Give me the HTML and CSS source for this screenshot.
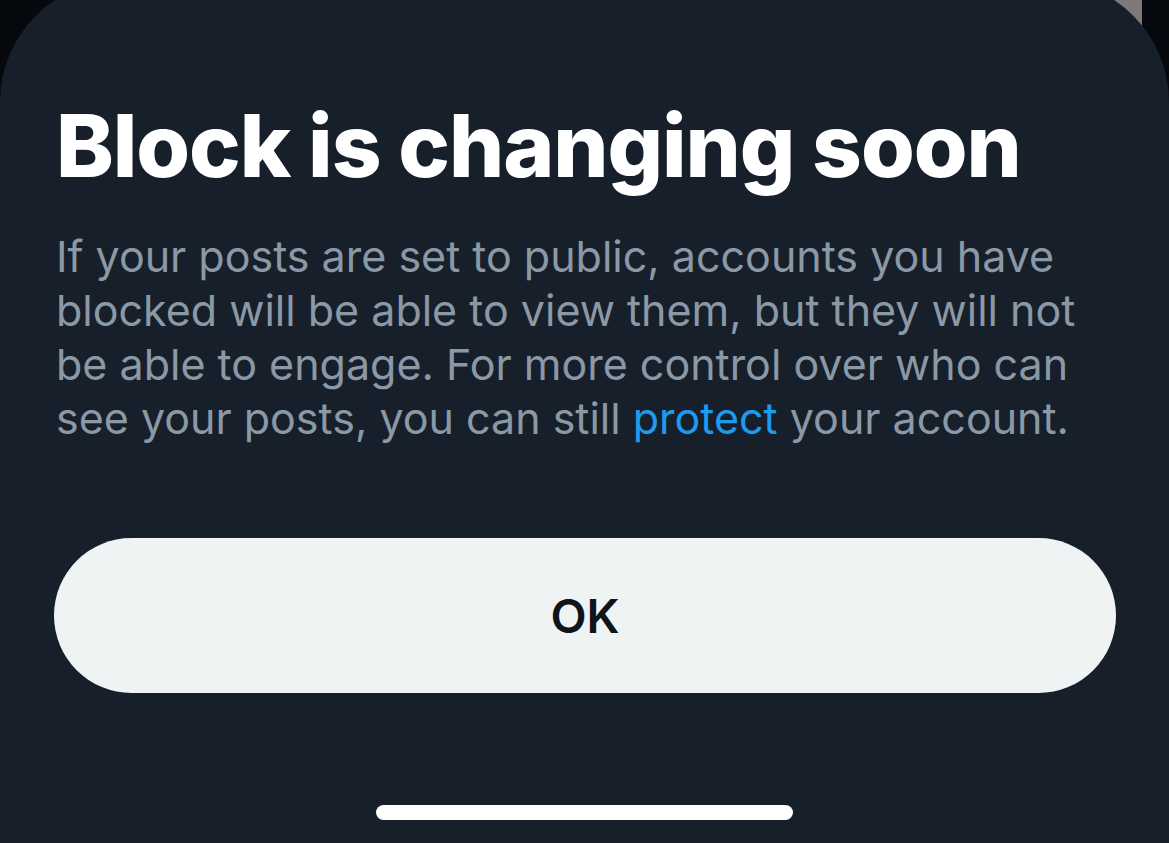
FILE: index.html
```html
<!DOCTYPE html>
<html lang="en">
<head>
<meta charset="utf-8">
<title>Block is changing soon</title>
<link rel="stylesheet" href="styles.css">
</head>
<body>
<div class="backdrop-card"></div>
<main class="sheet">
  <h1 class="title">Block is changing soon</h1>
  <p class="body">If your posts are set to public, accounts you have blocked will be able to view them, but they will not be able to engage. For more control over who can see your posts, you can still <a class="link" href="#">protect</a> your account.</p>
  <button class="ok-button" type="button">OK</button>
  <div class="home-indicator"></div>
</main>
</body>
</html>
```

FILE: styles.css
```css
html, body {
  margin: 0;
  padding: 0;
  width: 1169px;
  height: 843px;
  overflow: hidden;
  background: #05080c;
}

body {
  position: relative;
  font-family: Inter, "Liberation Sans", sans-serif;
}

.backdrop-card {
  position: absolute;
  left: 1060px;
  top: -40px;
  width: 82px;
  height: 70px;
  background: #7b7a78;
}

.sheet {
  position: relative;
  margin-top: -20px;
  height: 880px;
  background: #17202a;
  border-radius: 122px 122px 0 0;
  padding: 0 56px;
  display: flex;
  flex-direction: column;
  box-sizing: border-box;
}

.title {
  margin: 122px 0 0 0;
  font-size: 87px;
  line-height: 1;
  font-weight: 800;
  letter-spacing: -1.1px;
  color: #ffffff;
}

.body {
  margin: 40px 0 0 0;
  font-size: 43px;
  line-height: 54px;
  font-weight: 400;
  color: #8b98a5;
}

.link {
  color: #1d9bf0;
  text-decoration: none;
}

.ok-button {
  margin: 93px 0 0 -2px;
  width: 1062px;
  height: 155px;
  border: none;
  border-radius: 78px;
  background: #eff3f4;
  color: #0f1419;
  font-family: Inter, "Liberation Sans", sans-serif;
  font-size: 47px;
  font-weight: 600;
  padding: 0;
}

.home-indicator {
  align-self: center;
  margin-top: 112px;
  width: 417px;
  height: 15px;
  border-radius: 8px;
  background: #ffffff;
}
```
